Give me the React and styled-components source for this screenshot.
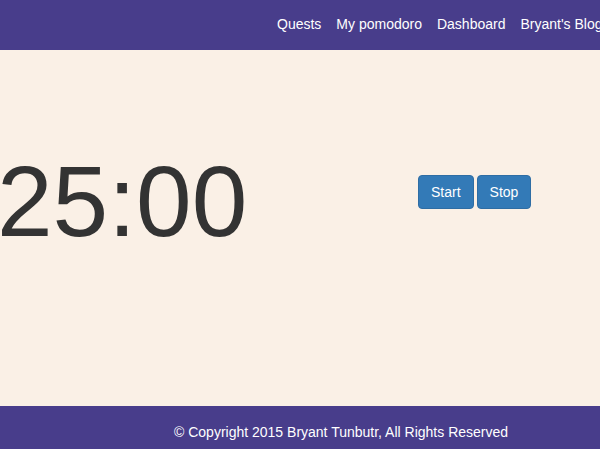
import React from "react";
import styled, { createGlobalStyle } from "styled-components";

const Global = createGlobalStyle`
  html, body { margin: 0; padding: 0; overflow: hidden; }
  body {
    background: #faf0e6;
    font-family: "Liberation Sans", Arial, sans-serif;
    font-size: 14px;
    color: #333;
  }
`;

const Page = styled.div`
  width: 600px;
  height: 449px;
  display: flex;
  flex-direction: column;
  overflow: hidden;
`;

const NavBar = styled.nav`
  height: 50px;
  flex: none;
  background: #483d8b;
  display: flex;
  align-items: center;
  padding-left: 277px;
  gap: 15px;
  white-space: nowrap;
`;

const NavLink = styled.a`
  color: #fff;
  text-decoration: none;
  font-size: 14px;
  line-height: 20px;
  padding-bottom: 2px;
`;

const Main = styled.main`
  flex: 1;
  display: flex;
  align-items: flex-start;
`;

const Timer = styled.h1`
  margin: 0;
  margin-left: -3px;
  margin-top: 96px;
  font-size: 100px;
  font-weight: 400;
  line-height: 110px;
  color: #333;
  width: 421px;
  white-space: nowrap;
`;

const Controls = styled.div`
  display: flex;
  gap: 3px;
  margin-top: 125px;
`;

const Button = styled.button`
  font-family: "Liberation Sans", Arial, sans-serif;
  font-size: 14px;
  line-height: 20px;
  padding: 6px 12px;
  height: 34px;
  color: #fff;
  background: #337ab7;
  border: 1px solid #2e6da4;
  border-radius: 4px;
  cursor: pointer;
`;

const Footer = styled.footer`
  height: 43px;
  flex: none;
  box-sizing: border-box;
  background: #483d8b;
  color: #fff;
  display: flex;
  align-items: center;
  padding-left: 174px;
  padding-top: 8px;
  font-size: 14px;
`;

export default function App() {
  return (
    <>
      <Global />
      <Page>
        <NavBar>
          <NavLink href="#">Quests</NavLink>
          <NavLink href="#">My pomodoro</NavLink>
          <NavLink href="#">Dashboard</NavLink>
          <NavLink href="#">Bryant's Blog</NavLink>
        </NavBar>
        <Main>
          <Timer>25:00</Timer>
          <Controls>
            <Button>Start</Button>
            <Button>Stop</Button>
          </Controls>
        </Main>
        <Footer>© Copyright 2015 Bryant Tunbutr, All Rights Reserved</Footer>
      </Page>
    </>
  );
}
